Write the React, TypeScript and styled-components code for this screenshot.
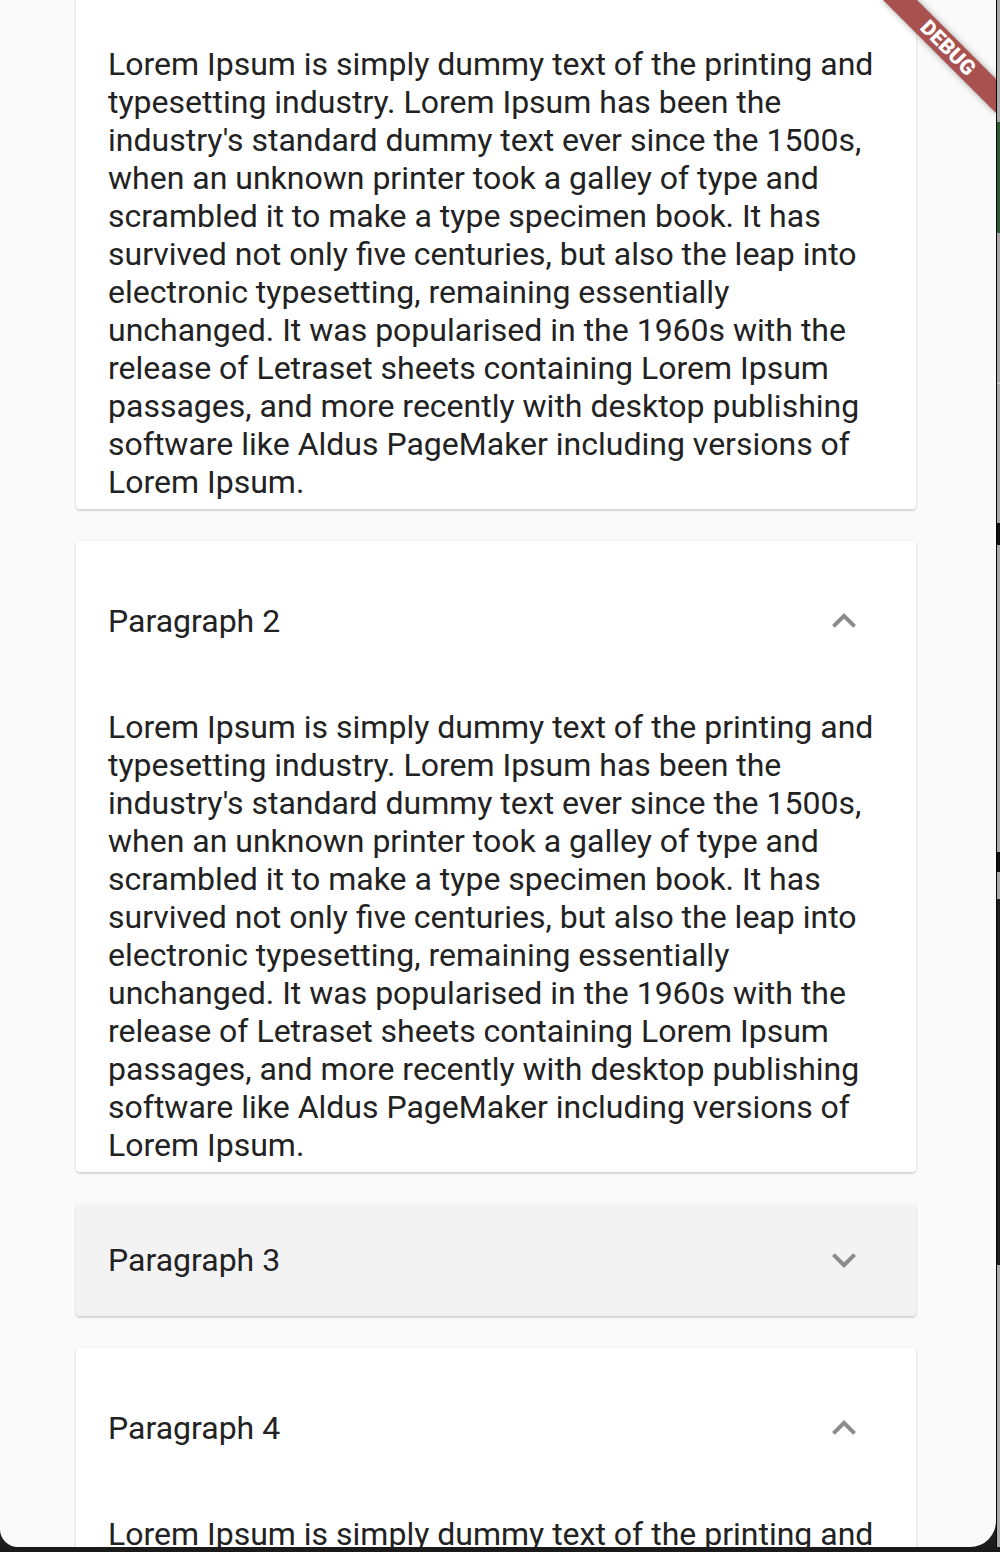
import React, { useLayoutEffect, useRef } from "react";
import styled, { createGlobalStyle } from "styled-components";

const GlobalStyle = createGlobalStyle`
  html, body {
    margin: 0;
    padding: 0;
    background: #1e1e1e;
    overflow: hidden;
  }
  * { box-sizing: border-box; }
`;

const LOREM =
  "Lorem Ipsum is simply dummy text of the printing and typesetting industry. Lorem Ipsum has been the industry's standard dummy text ever since the 1500s, when an unknown printer took a galley of type and scrambled it to make a type specimen book. It has survived not only five centuries, but also the leap into electronic typesetting, remaining essentially unchanged. It was popularised in the 1960s with the release of Letraset sheets containing Lorem Ipsum passages, and more recently with desktop publishing software like Aldus PageMaker including versions of Lorem Ipsum.";

const Device = styled.div`
  width: 1000px;
  height: 1552px;
  display: flex;
  flex-direction: column;
  background: #1e1e1e;
`;

const DeviceRow = styled.div`
  display: flex;
  height: 1547px;
`;

const Screen = styled.div`
  position: relative;
  width: 996px;
  height: 1547px;
  background: #fafafa;
  border-bottom-left-radius: 18px;
  border-bottom-right-radius: 26px;
  overflow: hidden;
`;

const Scroller = styled.div`
  height: 100%;
  overflow-y: scroll;
  scrollbar-width: none;
  &::-webkit-scrollbar { display: none; }
`;

const PanelList = styled.div`
  display: flex;
  flex-direction: column;
  gap: 32px;
  padding: 0 80px 40px 76px;
`;

const Card = styled.div<{ $collapsed?: boolean }>`
  background: ${(p) => (p.$collapsed ? "#f3f3f3" : "#ffffff")};
  border-radius: 4px;
  box-shadow: 0 1px 3px rgba(0, 0, 0, 0.16), 0 2px 2px rgba(0, 0, 0, 0.06);
  font-family: Roboto, "Liberation Sans", sans-serif;
  color: #222222;
`;

const Header = styled.div<{ $expanded?: boolean }>`
  display: flex;
  align-items: center;
  justify-content: space-between;
  height: ${(p) => (p.$expanded ? "160px" : "112px")};
  padding: 0 48px 0 32px;
`;

const Title = styled.div`
  font-size: 32px;
  line-height: 38px;
`;

const Chevron = styled.svg`
  width: 48px;
  height: 48px;
  fill: #8c8c8c;
  flex: none;
`;

const Body = styled.div`
  padding: 7px 32px 8px 32px;
  font-size: 32px;
  line-height: 38px;
`;

const SideStrip = styled.div`
  width: 4px;
  height: 100%;
  border-left: 1px solid #000;
  background: linear-gradient(
    to bottom,
    #a9a9a9 0px,
    #a9a9a9 122px,
    #2d5d32 122px,
    #2d5d32 233px,
    #a9a9a9 233px,
    #a9a9a9 382px,
    #c8c8c8 382px,
    #c8c8c8 384px,
    #a9a9a9 384px,
    #a9a9a9 523px,
    #111 523px,
    #111 545px,
    #a9a9a9 545px,
    #a9a9a9 852px,
    #111 852px,
    #111 872px,
    #a9a9a9 872px,
    #a9a9a9 899px,
    #1f1f1f 899px,
    #1f1f1f 1265px,
    #adadad 1265px,
    #adadad 100%
  );
`;

const BottomEdge = styled.div`
  height: 5px;
  background: #1a1a1a;
`;

const Ribbon = styled.div`
  position: absolute;
  top: 36px;
  right: -32px;
  width: 160px;
  height: 24px;
  transform: rotate(45deg);
  background: #a9514f;
  box-shadow: 0 0 6px rgba(0, 0, 0, 0.35);
  display: flex;
  align-items: center;
  justify-content: center;
  color: #ffffff;
  font-family: Roboto, "Liberation Sans", sans-serif;
  font-weight: 900;
  font-size: 21px;
  line-height: 24px;
  letter-spacing: 0.2px;
  pointer-events: none;
`;

const ExpandLess = () => (
  <Chevron viewBox="0 0 24 24">
    <path d="M12 8l-6 6 1.41 1.41L12 10.83l4.59 4.58L18 14z" />
  </Chevron>
);

const ExpandMore = () => (
  <Chevron viewBox="0 0 24 24">
    <path d="M16.59 8.59L12 13.17 7.41 8.59 6 10l6 6 6-6z" />
  </Chevron>
);

type PanelProps = { title: string; expanded: boolean };

const Panel = ({ title, expanded }: PanelProps) => (
  <Card $collapsed={!expanded}>
    <Header $expanded={expanded}>
      <Title>{title}</Title>
      {expanded ? <ExpandLess /> : <ExpandMore />}
    </Header>
    {expanded && <Body>{LOREM}</Body>}
  </Card>
);

const panels: PanelProps[] = [
  { title: "Paragraph 1", expanded: true },
  { title: "Paragraph 2", expanded: true },
  { title: "Paragraph 3", expanded: false },
  { title: "Paragraph 4", expanded: true },
  { title: "Paragraph 5", expanded: false },
];

export default function App() {
  const scrollRef = useRef<HTMLDivElement>(null);
  useLayoutEffect(() => {
    if (scrollRef.current) scrollRef.current.scrollTop = 122;
  }, []);
  return (
    <>
      <GlobalStyle />
      <Device>
        <DeviceRow>
          <Screen>
            <Scroller ref={scrollRef}>
              <PanelList>
                {panels.map((p) => (
                  <Panel key={p.title} {...p} />
                ))}
              </PanelList>
            </Scroller>
            <Ribbon>DEBUG</Ribbon>
          </Screen>
          <SideStrip />
        </DeviceRow>
        <BottomEdge />
      </Device>
    </>
  );
}
